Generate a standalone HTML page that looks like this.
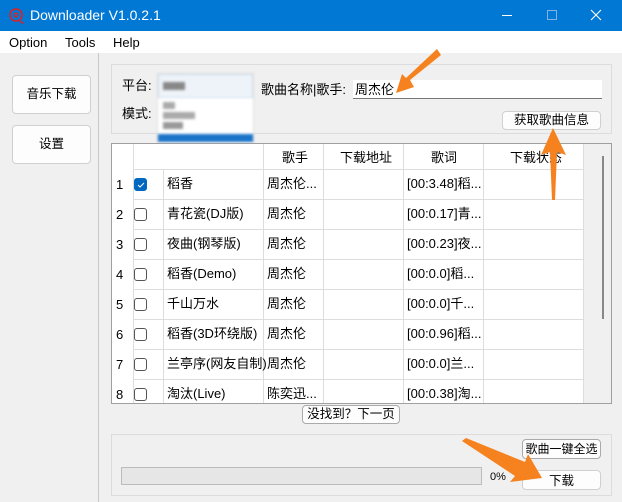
<!DOCTYPE html>
<html><head><meta charset="utf-8"><style>
*{margin:0;padding:0;box-sizing:border-box}
body{width:622px;height:502px;overflow:hidden;background:#f0f0f0;font-family:"Liberation Sans","Noto Sans CJK SC",sans-serif;font-size:13px;color:#000;position:relative}
.a{position:absolute}
.btn{position:absolute;background:#fdfdfd;border:1px solid #d0d0d0;border-radius:4px;text-align:center;font-size:12.5px;white-space:nowrap;overflow:hidden}
.c{position:absolute;font-size:13px;white-space:nowrap;line-height:16px}
.cb{position:absolute;width:13px;height:13px;border:1px solid #555;border-radius:3px;background:#fff}
</style></head><body>
<div class="a" style="left:0;top:0;width:622px;height:31px;background:#0078d4"></div>
<svg class="a" style="left:8px;top:7px" width="18" height="18" viewBox="0 0 18 18"><circle cx="8" cy="8" r="6" fill="none" stroke="#e02020" stroke-width="1.5"/><circle cx="8" cy="8" r="2" fill="none" stroke="#e02020" stroke-width="1.3"/><path d="M11 13 l3 3 h2" stroke="#e02020" stroke-width="1.3" fill="none"/></svg>
<div class="c" style="left:30px;top:7px;color:#fff;font-size:14px">Downloader V1.0.2.1</div>
<div class="a" style="left:502px;top:15px;width:10px;height:1px;background:#fff"></div>
<div class="a" style="left:547px;top:10px;width:10px;height:10px;border:1px solid #7fb4e6"></div>
<svg class="a" style="left:590px;top:9px" width="12" height="12"><path d="M1 1L11 11M11 1L1 11" stroke="#fff" stroke-width="1.1"/></svg>
<div class="a" style="left:0;top:31px;width:622px;height:22px;background:#fff"></div>
<div class="c" style="left:9px;top:35px">Option</div>
<div class="c" style="left:65px;top:35px">Tools</div>
<div class="c" style="left:113px;top:35px">Help</div>
<div class="a" style="left:98px;top:53px;width:1px;height:449px;background:#c8c8c8"></div>
<div class="btn" style="left:12px;top:75px;width:79px;height:39px;line-height:37px">音乐下载</div>
<div class="btn" style="left:12px;top:125px;width:79px;height:39px;line-height:37px">设置</div>
<div class="a" style="left:111px;top:64px;width:501px;height:70px;border:1px solid #dcdcdc"></div>
<div class="c" style="left:122px;top:78px">平台:</div>
<div class="c" style="left:122px;top:106px">模式:</div>
<div class="a" style="left:157px;top:73px;width:97px;height:88px;background:#fff;filter:blur(1.3px);border:1px solid #ddd">
<div class="a" style="left:0;top:0;width:95px;height:24px;background:#eef3f9;border:1px solid #cde"></div>
<div class="a" style="left:5px;top:8px;width:22px;height:8px;background:#888"></div>
<div class="a" style="left:5px;top:28px;width:12px;height:7px;background:#aaa"></div>
<div class="a" style="left:5px;top:38px;width:32px;height:7px;background:#aaa"></div>
<div class="a" style="left:5px;top:48px;width:20px;height:7px;background:#999"></div>
<div class="a" style="left:0;top:60px;width:95px;height:8px;background:#1a73c8"></div>
<div class="a" style="left:5px;top:72px;width:22px;height:8px;background:#aaa"></div>
</div>
<div class="c" style="left:261px;top:82px">歌曲名称|歌手:</div>
<div class="a" style="left:353px;top:80px;width:249px;height:19px;background:#fff;border-bottom:1px solid #777"></div>
<div class="c" style="left:355px;top:82px">周杰伦</div>
<div class="btn" style="left:502px;top:111px;width:99px;height:19px;line-height:17px">获取歌曲信息</div>
<div class="a" style="left:111px;top:143px;width:501px;height:261px;background:#fff;border:1px solid #a0a0a0;overflow:hidden">
<div class="a" style="left:471px;top:0;width:29px;height:261px;background:#f0f0f0"></div>
<div class="a" style="left:490px;top:12px;width:2px;height:163px;background:#888"></div>
<div class="a" style="left:21px;top:0;width:1px;height:261px;background:#ddd"></div>
<div class="a" style="left:51px;top:26px;width:1px;height:235px;background:#ddd"></div>
<div class="a" style="left:151px;top:0;width:1px;height:261px;background:#ddd"></div>
<div class="a" style="left:211px;top:0;width:1px;height:261px;background:#ddd"></div>
<div class="a" style="left:291px;top:0;width:1px;height:261px;background:#ddd"></div>
<div class="a" style="left:371px;top:0;width:1px;height:261px;background:#ddd"></div>
<div class="a" style="left:471px;top:0;width:1px;height:261px;background:#ddd"></div>
<div class="c" style="left:170px;top:6px">歌手</div>
<div class="c" style="left:228px;top:6px">下载地址</div>
<div class="c" style="left:319px;top:6px">歌词</div>
<div class="c" style="left:398px;top:6px">下载状态</div>
</div>
<div id="rows"></div>
<script>
var d=[["稻香","周杰伦...","[00:3.48]稻..."],["青花瓷(DJ版)","周杰伦","[00:0.17]青..."],["夜曲(钢琴版)","周杰伦","[00:0.23]夜..."],["稻香(Demo)","周杰伦","[00:0.0]稻..."],["千山万水","周杰伦","[00:0.0]千..."],["稻香(3D环绕版)","周杰伦","[00:0.96]稻..."],["兰亭序(网友自制)","周杰伦","[00:0.0]兰..."],["淘汰(Live)","陈奕迅...","[00:0.38]淘..."]];
var h="";for(var i=0;i<8;i++){var y=170+i*30;
h+='<div class="a" style="left:133px;top:'+(y-1)+'px;width:450px;height:1px;background:#ddd"></div>';
h+='<div class="c" style="left:116px;top:'+(y+7)+'px">'+(i+1)+'</div>';
h+=i==0?'<div class="cb" style="left:134px;top:'+(y+8)+'px;background:#0067c0;border-color:#0067c0"><svg width="11" height="11" style="position:absolute;left:0;top:0"><path d="M3 6l2 2 4-4" stroke="#fff" stroke-width="1" fill="none"/></svg></div>':'<div class="cb" style="left:134px;top:'+(y+8)+'px"></div>';
h+='<div class="c" style="left:167px;top:'+(y+6)+'px">'+d[i][0]+'</div><div class="c" style="left:267px;top:'+(y+6)+'px">'+d[i][1]+'</div><div class="c" style="left:407px;top:'+(y+6)+'px">'+d[i][2]+'</div>';}
document.getElementById("rows").innerHTML=h;
</script>
<div class="btn" style="left:302px;top:405px;width:98px;height:19px;line-height:17px;border-color:#aaa">没找到？下一页</div>
<div class="a" style="left:111px;top:434px;width:501px;height:62px;border:1px solid #dcdcdc"></div>
<div class="btn" style="left:522px;top:439px;width:79px;height:20px;line-height:18px;border-color:#aaa;font-size:12px">歌曲一键全选</div>
<div class="a" style="left:121px;top:467px;width:361px;height:18px;background:#e6e6e6;border:1px solid #bcbcbc"></div>
<div class="c" style="left:490px;top:469px;font-size:11px">0%</div>
<div class="btn" style="left:522px;top:470px;width:79px;height:20px;line-height:20px">下载</div>
<svg class="a" style="left:0;top:0" width="622" height="502">
<polygon points="437,49 441,55 410,80 414,87 396,93 402,74 406,78" fill="#f5821f"/>
<polygon points="553,128 566,155 557,152 555,200 552,200 550,152 541,155" fill="#f5821f"/>
<polygon points="462,441 466,438 525,462 528,454 542,478 510,482 515,476" fill="#f5821f"/>
</svg>
</body></html>
